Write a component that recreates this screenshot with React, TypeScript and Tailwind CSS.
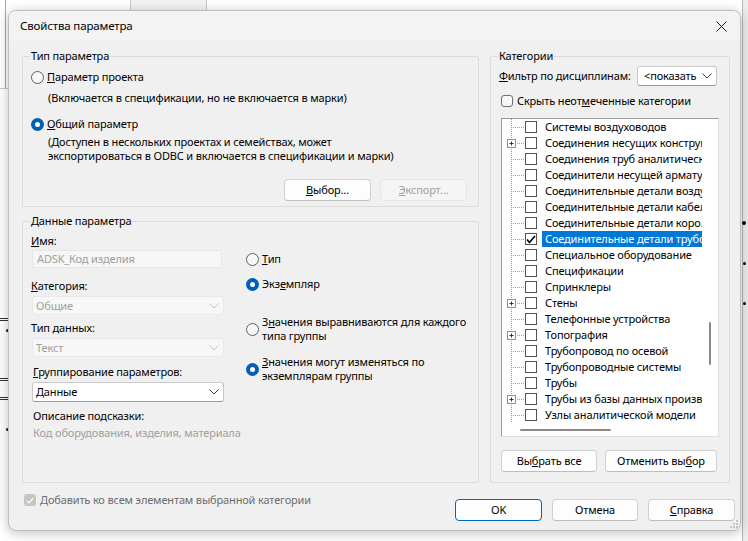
import type { ReactNode } from "react";

const tree: { label: string; plus?: boolean; checked?: boolean }[] = [
  { label: "Системы воздуховодов" },
  { label: "Соединения несущих конструкций", plus: true },
  { label: "Соединения труб аналитической модели" },
  { label: "Соединители несущей армату..." },
  { label: "Соединительные детали воздуховодов" },
  { label: "Соединительные детали кабельных лотков" },
  { label: "Соединительные детали коро..." },
  { label: "Соединительные детали трубопроводов", checked: true },
  { label: "Специальное оборудование" },
  { label: "Спецификации" },
  { label: "Спринклеры" },
  { label: "Стены", plus: true },
  { label: "Телефонные устройства" },
  { label: "Топография", plus: true },
  { label: "Трубопровод по осевой" },
  { label: "Трубопроводные системы" },
  { label: "Трубы" },
  { label: "Трубы из базы данных производителя", plus: true },
  { label: "Узлы аналитической модели" },
];

function Group({ title, className, children }: { title: string; className: string; children: ReactNode }) {
  return (
    <div className={`relative rounded-[2px] border border-[#dcdcdc] ${className}`}>
      <span className="absolute left-[7px] top-[-9px] bg-[#f0f0f0] px-[1px] leading-[16px]">{title}</span>
      {children}
    </div>
  );
}

function Radio({ on }: { on?: boolean }) {
  return on ? (
    <span className="flex h-[13px] w-[13px] shrink-0 items-center justify-center rounded-full bg-[#005fb8]">
      <span className="h-[5px] w-[5px] rounded-full bg-white" />
    </span>
  ) : (
    <span className="h-[13px] w-[13px] shrink-0 rounded-full border border-[#5f5f5f] bg-[#f7f7f7]" />
  );
}

function Btn({ children, w, disabled, primary }: { children: ReactNode; w: string; disabled?: boolean; primary?: boolean }) {
  return (
    <div
      className={`flex h-[22px] ${w} items-center justify-center rounded-[4px] border ${
        disabled
          ? "border-[#e5e5e5] bg-[#f5f5f5] text-[#a0a0a0]"
          : primary
          ? "border-[#0067c0] bg-[#fdfdfd]"
          : "border-[#d0d0d0] border-b-[#bdbdbd] bg-[#fdfdfd]"
      }`}
    >
      {children}
    </div>
  );
}

function Chevron({ color }: { color: string }) {
  return (
    <svg width="10" height="6" viewBox="0 0 10 6" className="shrink-0">
      <path d="M0.5 0.5 L5 5 L9.5 0.5" fill="none" stroke={color} strokeWidth="1" />
    </svg>
  );
}

function Select({ value, disabled, className }: { value: string; disabled?: boolean; className: string }) {
  return (
    <div
      className={`flex items-center justify-between rounded-[3px] border pl-[3px] pr-[4px] ${className} ${
        disabled ? "border-[#e8e8e8] bg-[#f7f7f7] text-[#a0a0a0]" : "border-[#c8c8c8] border-b-[#9a9a9a] bg-white text-black"
      }`}
    >
      <span className="whitespace-nowrap">{value}</span>
      <Chevron color={disabled ? "#c4c4c4" : "#404040"} />
    </div>
  );
}

function Connector({ plus }: { plus?: boolean }) {
  return (
    <svg width="23" height="16" viewBox="0 0 23 16" className="shrink-0">
      <line x1="9.5" y1="0" x2="9.5" y2="16" stroke="#a0a0a0" strokeDasharray="1 1" />
      <line x1="11" y1="8.5" x2="22" y2="8.5" stroke="#a0a0a0" strokeDasharray="1 1" />
      {plus && (
        <g>
          <rect x="5.5" y="4.5" width="8" height="8" fill="white" stroke="#919191" />
          <line x1="7.5" y1="8.5" x2="11.5" y2="8.5" stroke="#1d2c6b" />
          <line x1="9.5" y1="6.5" x2="9.5" y2="10.5" stroke="#1d2c6b" />
        </g>
      )}
    </svg>
  );
}

export default function App() {
  return (
    <div
      className="relative h-[541px] w-[748px] overflow-hidden bg-white pl-[8px] pt-[10px] text-[11px] leading-[16px] tracking-[-0.15px] text-black"
      style={{ fontFamily: "'Segoe UI', 'Noto Sans', sans-serif" }}
    >
      {/* desktop behind the dialog */}
      <div className="absolute left-[5px] top-0 h-[88px] w-px bg-[#a8a8a8]" />
      <div className="absolute left-0 top-[88px] h-px w-[8px] bg-[#c8c8c8]" />
      <div className="absolute left-[130px] top-0 h-[10px] w-[77px] border-x border-[#c8c8c8] bg-[#f3f3f3]" />
      <div className="absolute right-0 top-0 h-full w-[6px] border-l border-[#b8b8b8] bg-[#ececec]" />
      <div className="absolute right-[2px] top-[221px] h-[4px] w-[4px] rounded-full bg-black" />
      <div className="absolute right-[2px] top-[262px] h-[3px] w-[3px] rounded-full bg-black" />
      <div className="absolute right-[2px] top-[302px] h-[3px] w-[3px] rounded-full bg-black" />
      <div className="absolute left-0 top-[318px] h-[3px] w-[8px] border-y border-[#333]" />
      <div className="absolute left-[6px] top-[329px] h-[3px] w-[3px] rounded-full bg-black" />
      <div className="absolute left-0 top-[378px] h-[3px] w-[8px] border-y border-[#333]" />
      <div className="absolute left-0 top-[397px] h-[3px] w-[8px] border-y border-[#333]" />
      <div className="absolute left-[6px] top-[428px] h-[3px] w-[3px] rounded-full bg-black" />

      <div className="relative flex h-[521px] w-[733px] flex-col overflow-hidden rounded-[8px] border border-[#bdbdbd] bg-[#f0f0f0] shadow-[0_2px_12px_rgba(0,0,0,0.25)]">
        {/* title bar */}
        <div className="flex h-[30px] shrink-0 items-center justify-between bg-[#f3f3f3] pl-[11px] pr-[13px]">
          <span className="text-[11.5px]">Свойства параметра</span>
          <svg width="11" height="11" viewBox="0 0 11 11">
            <path d="M0.5 0.5 L10.5 10.5 M10.5 0.5 L0.5 10.5" stroke="#1a1a1a" strokeWidth="1" />
          </svg>
        </div>

        {/* body */}
        <div className="flex flex-1 flex-col pl-[13px] pr-[10px] pt-[15px]">
          <div className="flex gap-[11px]">
            <div className="flex w-[457px] flex-col gap-[14px]">
              <Group title="Тип параметра" className="h-[151px]">
                <div className="flex flex-col pl-[8px] pt-[12px]">
                  <div className="flex h-[16px] items-center gap-[3px]">
                    <Radio />
                    <span>
                      <u>П</u>араметр проекта
                    </span>
                  </div>
                  <div className="mt-[5px] pl-[17px]">(Включается в спецификации, но не включается в марки)</div>
                  <div className="mt-[10px] flex h-[16px] items-center gap-[3px]">
                    <Radio on />
                    <span>
                      <u>О</u>бщий параметр
                    </span>
                  </div>
                  <div className="mt-[3px] pl-[17px] leading-[14px]">
                    (Доступен в нескольких проектах и семействах, может
                    <br />
                    экспортироваться в ODBC и включается в спецификации и марки)
                  </div>
                  <div className="mt-[16px] flex justify-end gap-[9px] pr-[11px]">
                    <Btn w="w-[87px]">
                      <span>
                        <u>В</u>ыбор...
                      </span>
                    </Btn>
                    <Btn w="w-[87px]" disabled>
                      <span>
                        <u>Э</u>кспорт...
                      </span>
                    </Btn>
                  </div>
                </div>
              </Group>

              <Group title="Данные параметра" className="h-[262px]">
                <div className="flex">
                  <div className="flex w-[210px] flex-col pl-[8px] pt-[11px]">
                    <div>
                      <u>И</u>мя:
                    </div>
                    <div className="ml-[1px] mt-[1px] flex h-[18px] w-[190px] items-center rounded-[2px] border border-[#e6e6e6] bg-[#f6f6f6] pl-[4px] text-[#a0a0a0]">
                      ADSK_Код изделия
                    </div>
                    <div className="mt-[10px]">
                      <u>К</u>атегория:
                    </div>
                    <Select value="Общие" disabled className="ml-[1px] mt-[2px] h-[19px] w-[192px]" />
                    <div className="mt-[5px]">
                      Тип <u>д</u>анных:
                    </div>
                    <Select value="Текст" disabled className="ml-[1px] mt-[2px] h-[19px] w-[192px]" />
                    <div className="ml-[2px] mt-[7px]">
                      <u>Г</u>руппирование параметров:
                    </div>
                    <Select value="Данные" className="ml-[1px] mt-[2px] h-[20px] w-[192px]" />
                    <div className="ml-[2px] mt-[6px]">Описание подсказки:</div>
                    <div className="ml-[2px] mt-[1px] whitespace-nowrap text-[#a0a0a0]">Код оборудования, изделия, материала</div>
                  </div>

                  <div className="ml-[13px] flex flex-col whitespace-nowrap pt-[29px]">
                    <div className="flex h-[16px] items-center gap-[3px]">
                      <Radio />
                      <span>
                        <u>Т</u>ип
                      </span>
                    </div>
                    <div className="mt-[9px] flex h-[16px] items-center gap-[3px]">
                      <Radio on />
                      <span>
                        Экз<u>е</u>мпляр
                      </span>
                    </div>
                    <div className="mt-[23px] flex items-center gap-[3px]">
                      <Radio />
                      <span className="leading-[14px]">
                        З<u>н</u>ачения выравниваются для каждого
                        <br />
                        типа группы
                      </span>
                    </div>
                    <div className="mt-[12px] flex items-center gap-[3px]">
                      <Radio on />
                      <span className="leading-[14px]">
                        <u>З</u>начения могут изменяться по
                        <br />
                        экземплярам группы
                      </span>
                    </div>
                  </div>
                </div>
              </Group>
            </div>

            <Group title="Категории" className="h-[427px] w-[240px]">
              <div className="flex flex-col pt-[9px]">
                <div className="flex h-[20px] items-center justify-between whitespace-nowrap pl-[8px] pr-[12px]">
                  <span>
                    <u>Ф</u>ильтр по дисциплинам:
                  </span>
                  <Select value="<показать" className="h-[20px] w-[80px] pl-[6px]" />
                </div>
                <div className="mt-[7px] flex h-[16px] items-center gap-[4px] pl-[10px]">
                  <span className="h-[12px] w-[12px] rounded-[3px] border border-[#6f6f6f] bg-[#f7f7f7]" />
                  <span>
                    Скрыть неот<u>м</u>еченные категории
                  </span>
                </div>

                <div className="ml-[10px] mt-[9px] flex h-[319px] w-[218px] flex-col border border-[#9a9a9a] border-b-[#e0e0e0] border-r-[#e0e0e0] bg-white">
                  <div className="flex min-h-0 flex-1">
                    <div className="flex w-[200px] flex-col overflow-hidden">
                      {tree.map((r) => (
                        <div key={r.label} className="flex h-[16px] shrink-0 items-center">
                          <Connector plus={r.plus} />
                          <span className="flex h-[12px] w-[12px] shrink-0 items-center justify-center border border-[#555] bg-white">
                            {r.checked && (
                              <svg width="10" height="9" viewBox="0 0 10 9">
                                <path d="M1 4.5 L3.5 7.5 L9 1" fill="none" stroke="#000" strokeWidth="1.6" />
                              </svg>
                            )}
                          </span>
                          <span
                            className={`ml-[5px] whitespace-nowrap pl-[3px] pr-[2px] ${
                              r.checked ? "bg-[#0078d7] text-white" : ""
                            }`}
                          >
                            {r.label}
                          </span>
                        </div>
                      ))}
                    </div>
                    <div className="flex w-[16px] justify-center pt-[203px]">
                      <div className="h-[43px] w-[2px] rounded-full bg-[#8a8a8a]" />
                    </div>
                  </div>
                  <div className="flex h-[13px] shrink-0 items-center pl-[18px]">
                    <div className="h-[2px] w-[91px] rounded-full bg-[#8a8a8a]" />
                  </div>
                </div>

                <div className="ml-[10px] mt-[13px] flex gap-[8px]">
                  <Btn w="w-[96px]">
                    <span>
                      Вы<u>б</u>рать все
                    </span>
                  </Btn>
                  <Btn w="w-[112px]">
                    <span>
                      Отменить вы<u>б</u>ор
                    </span>
                  </Btn>
                </div>
              </div>
            </Group>
          </div>

          {/* bottom row */}
          <div className="flex items-start">
            <div className="ml-[2px] mt-[11px] flex h-[12px] items-center gap-[4px]">
              <span className="flex h-[12px] w-[12px] items-center justify-center rounded-[3px] bg-[#c5c5c5]">
                <svg width="8" height="7" viewBox="0 0 8 7">
                  <path d="M0.8 3.6 L3 5.8 L7.2 1" fill="none" stroke="#fff" strokeWidth="1.2" />
                </svg>
              </span>
              <span className="text-[#6d6d6d]">
                <u>Д</u>обавить ко всем элементам выбранной категории
              </span>
            </div>
            <div className="-mr-[5px] ml-auto mt-[16px] flex gap-[10px]">
              <Btn w="w-[87px]" primary>
                OK
              </Btn>
              <Btn w="w-[86px]">Отмена</Btn>
              <Btn w="w-[87px]">
                <span>
                  <u>С</u>правка
                </span>
              </Btn>
            </div>
          </div>
        </div>

        {/* resize grip */}
        <svg width="8" height="8" viewBox="0 0 8 8" className="absolute bottom-[2px] right-[2px]">
          <rect x="6" y="0" width="2" height="2" fill="#c4c4c4" />
          <rect x="3" y="3" width="2" height="2" fill="#c4c4c4" />
          <rect x="6" y="3" width="2" height="2" fill="#c4c4c4" />
          <rect x="0" y="6" width="2" height="2" fill="#c4c4c4" />
          <rect x="3" y="6" width="2" height="2" fill="#c4c4c4" />
          <rect x="6" y="6" width="2" height="2" fill="#c4c4c4" />
        </svg>
      </div>
    </div>
  );
}
